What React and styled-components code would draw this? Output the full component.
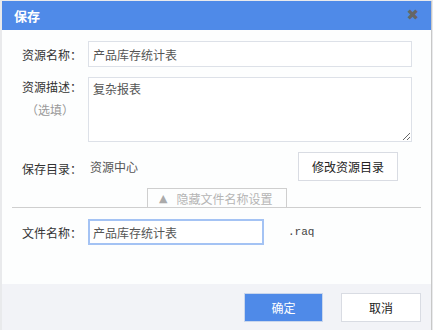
import React from "react";
import styled, { createGlobalStyle } from "styled-components";

const GlobalStyle = createGlobalStyle`
  html, body {
    margin: 0;
    padding: 0;
    background: #e9eaec;
    font-family: "Noto Sans CJK SC", "Liberation Sans", sans-serif;
    overflow: hidden;
  }
`;

const Page = styled.div`
  padding: 1px 0 0 2px;
  height: 330px;
  box-sizing: border-box;
`;

const Dialog = styled.div`
  width: 430px;
  background: #fdfefe;
  border-right: 1px solid #c8c8c8;
  box-sizing: border-box;
  display: flex;
  flex-direction: column;
`;

const Header = styled.div`
  height: 29px;
  background: #4f8ae8;
  display: flex;
  align-items: center;
  justify-content: space-between;
  padding: 0 12px 0 12px;
`;

const Title = styled.span`
  color: #fff;
  font-size: 13px;
  font-weight: bold;
`;

const Close = styled.span`
  color: #666;
  font-size: 15px;
  font-weight: bold;
  line-height: 1;
  font-family: "DejaVu Sans", sans-serif;
`;

const Body = styled.div`
  padding: 11px 18px 0 20px;
  display: flex;
  flex-direction: column;
  gap: 10px;
`;

const Row = styled.div`
  display: flex;
  align-items: ${(p) => p.align || "center"};
  margin-top: ${(p) => p.mt || 0}px;
`;

const LabelCol = styled.div`
  width: 66px;
  flex: none;
  display: flex;
  flex-direction: column;
  padding-top: ${(p) => p.top || 0}px;
`;

const Label = styled.span`
  font-size: 12px;
  color: #333;
  white-space: nowrap;
`;

const SubLabel = styled.span`
  font-size: 12px;
  color: #999;
  width: 56px;
  text-align: center;
  margin-top: 6px;
`;

const TextInput = styled.input`
  box-sizing: border-box;
  width: ${(p) => p.w}px;
  height: 26px;
  border: ${(p) => (p.focused ? "2px solid #a4c3f4" : "1px solid #dde1e8")};
  padding: 0 ${(p) => (p.focused ? 3 : 4)}px;
  font-family: inherit;
  font-size: 12px;
  color: #555;
  outline: none;
  background: #fff;
`;

const TextArea = styled.textarea`
  box-sizing: border-box;
  width: 324px;
  height: 65px;
  border: 1px solid #dde1e8;
  padding: 2px 4px;
  font-family: inherit;
  font-size: 12px;
  color: #555;
  outline: none;
  resize: both;
  display: block;
`;

const Value = styled.span`
  font-size: 12px;
  color: #555;
  margin-left: 2px;
  flex: 1;
`;

const Button = styled.button`
  box-sizing: border-box;
  width: ${(p) => p.w}px;
  height: 29px;
  font-family: inherit;
  font-size: 12px;
  border: 1px solid ${(p) => (p.primary ? "#c9d6ec" : "#d9dce3")};
  background: ${(p) => (p.primary ? "#4f8ae8" : "#fff")};
  color: ${(p) => (p.primary ? "#fff" : "#222")};
  padding: 0;
  margin-right: ${(p) => p.mr || 0}px;
`;

const Divider = styled.div`
  margin: -3px -8px 0 -10px;
  border-bottom: 1px solid #cfcfcf;
  display: flex;
  justify-content: flex-start;
  padding-left: 135px;
`;

const ToggleTab = styled.div`
  width: 140px;
  height: 19px;
  box-sizing: border-box;
  border: 1px solid #cfcfcf;
  border-bottom: none;
  display: flex;
  align-items: center;
  padding-left: 11px;
  gap: 9px;
  font-size: 12px;
  color: #b5b5b5;
`;

const Arrow = styled.span`
  font-size: 11px;
  color: #aaa;
  font-family: "DejaVu Sans", sans-serif;
`;

const Ext = styled.span`
  font-family: "Liberation Mono", monospace;
  font-size: 11px;
  color: #444;
  margin-left: 24px;
`;

const Footer = styled.div`
  margin-top: 39px;
  height: 47px;
  background: #f2f3f7;
  display: flex;
  align-items: center;
  justify-content: flex-end;
  padding-right: 10px;
  gap: 18px;
`;

export default function App() {
  return (
    <Page>
      <GlobalStyle />
      <Dialog>
        <Header>
          <Title>保存</Title>
          <Close>✖</Close>
        </Header>
        <Body>
          <Row>
            <LabelCol>
              <Label>资源名称：</Label>
            </LabelCol>
            <TextInput w={324} defaultValue="产品库存统计表" />
          </Row>
          <Row align="flex-start">
            <LabelCol top={1}>
              <Label>资源描述：</Label>
              <SubLabel>（选填）</SubLabel>
            </LabelCol>
            <TextArea defaultValue="复杂报表" />
          </Row>
          <Row>
            <LabelCol top={3}>
              <Label>保存目录：</Label>
            </LabelCol>
            <Value>资源中心</Value>
            <Button w={100} mr={15}>修改资源目录</Button>
          </Row>
          <Divider>
            <ToggleTab>
              <Arrow>▲</Arrow>
              <span>隐藏文件名称设置</span>
            </ToggleTab>
          </Divider>
          <Row mt={1}>
            <LabelCol>
              <Label>文件名称：</Label>
            </LabelCol>
            <TextInput w={176} focused defaultValue="产品库存统计表" />
            <Ext>.raq</Ext>
          </Row>
        </Body>
        <Footer>
          <Button w={79} primary>确定</Button>
          <Button w={80}>取消</Button>
        </Footer>
      </Dialog>
    </Page>
  );
}
